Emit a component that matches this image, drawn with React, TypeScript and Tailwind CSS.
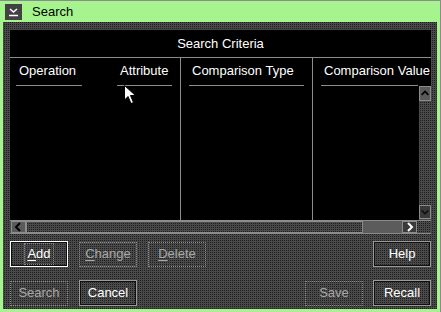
import React from "react";

const dither =
  "bg-[#3e3e3e] bg-[image:conic-gradient(#1e1e1e_0_25%,#4a4a4a_0_100%)] bg-[size:2px_2px]";

type BtnProps = {
  label: string;
  mnemonic?: number;
  disabled?: boolean;
  focused?: boolean;
};

function Button({ label, mnemonic, disabled, focused }: BtnProps) {
  const text =
    mnemonic === undefined ? (
      label
    ) : (
      <>
        {label.slice(0, mnemonic)}
        <span className="underline underline-offset-2">{label[mnemonic]}</span>
        {label.slice(mnemonic + 1)}
      </>
    );

  if (disabled) {
    return (
      <div className="flex h-[25px] w-[58px] items-center justify-center border border-dotted border-[#8a8a8a] text-[13px] text-[#a8a8a8]">
        {text}
      </div>
    );
  }

  return (
    <div
      className={
        "flex h-[26px] w-[58px] items-center justify-center border text-[13px] text-white shadow-[inset_0_0_0_1px_#101010] " +
        (focused ? "border-white" : "border-[#9a9a9a]")
      }
    >
      <span className={focused ? "outline outline-1 outline-dotted outline-[#8a8a8a] px-[2px]" : ""}>
        {text}
      </span>
    </div>
  );
}

function Chevron({ dir, color }: { dir: "up" | "down" | "left" | "right"; color: string }) {
  const paths = {
    up: "M2 7 L6 3 L10 7",
    down: "M2 4 L6 8 L10 4",
    left: "M7 2 L3 6 L7 10",
    right: "M4 2 L8 6 L4 10",
  };
  return (
    <svg width="12" height="12" viewBox="0 0 12 12">
      <path d={paths[dir]} fill="none" stroke={color} strokeWidth="2" />
    </svg>
  );
}

function ColumnHeader({ label, className }: { label: string; className: string }) {
  return (
    <div
      className={
        "whitespace-nowrap border-b border-[#8c8c8c] pl-[3px] pt-[5px] pb-[6px] leading-[16px] " + className
      }
    >
      {label}
    </div>
  );
}

export default function App() {
  return (
    <div className="relative h-[312px] w-[441px] overflow-hidden border-t border-r border-[#8c8c8c] bg-[#a6f48e] font-['Liberation_Sans',Arial,sans-serif] text-[13px]">
      {/* title bar */}
      <div className="flex h-[21px] items-center pl-[5px]">
        <div className="flex h-[16px] w-[17px] items-center justify-center bg-[#424242]">
          <svg width="11" height="10" viewBox="0 0 11 10">
            <path d="M2 2 L5.5 5 L9 2" fill="none" stroke="#fff" strokeWidth="1.5" />
            <path d="M1 8.5 H10" stroke="#fff" strokeWidth="1.5" />
          </svg>
        </div>
        <span className="ml-[10px] text-[13px] leading-none text-black">Search</span>
      </div>

      {/* client area */}
      <div className={"mx-[3px] flex h-[287px] flex-col pl-[7px] pr-[6px] pt-[8px] " + dither}>
        <div className="flex flex-col bg-black text-white">
          <div className="flex h-[28px] items-center justify-center border-b border-[#8c8c8c] pt-[1px]">
            Search Criteria
          </div>
          <div className="flex h-[162px]">
            <div className="flex w-[171px] border-r border-[#8c8c8c]">
              <ColumnHeader label="Operation" className="ml-[6px] h-[28px] w-[66px]" />
              <ColumnHeader label="Attribute" className="ml-[35px] h-[28px] w-[55px]" />
            </div>
            <div className="w-[132px] border-r border-[#8c8c8c]">
              <ColumnHeader label="Comparison Type" className="ml-[8px] h-[28px] w-[115px]" />
            </div>
            <div className="flex flex-1 flex-col overflow-hidden">
              <ColumnHeader label="Comparison Value" className="ml-[8px] mr-[13px] h-[28px]" />
              <div className="flex flex-1">
                <div className="flex-1" />
                <div className={"flex w-[12px] flex-col justify-between pb-[1px] " + dither}>
                  <div className="flex h-[15px] items-center justify-center border border-[#8c8c8c] bg-[#5a5a5a]">
                    <Chevron dir="up" color="#000" />
                  </div>
                  <div className="flex h-[14px] items-center justify-center border border-[#8c8c8c] bg-[#3a3a3a]">
                    <Chevron dir="down" color="#111" />
                  </div>
                </div>
              </div>
            </div>
          </div>
          <div className={"flex h-[14px] items-stretch border-y border-[#8c8c8c] " + dither}>
            <div className="ml-[1px] flex w-[15px] items-center justify-center border border-[#8c8c8c] bg-[#5a5a5a]">
              <Chevron dir="left" color="#000" />
            </div>
            <div className="w-[337px] border border-[#8c8c8c]" />
            <div className="w-[39px] bg-[#5c5c5c]" />
            <div className="flex w-[15px] items-center justify-center border border-[#8c8c8c] bg-[#3a3a3a]">
              <Chevron dir="right" color="#fff" />
            </div>
            <div className="flex-1" />
          </div>
        </div>

        {/* buttons */}
        <div className="mt-[7px] flex items-center">
          <Button label="Add" mnemonic={0} focused />
          <div className="ml-[11px]">
            <Button label="Change" mnemonic={0} disabled />
          </div>
          <div className="ml-[11px]">
            <Button label="Delete" mnemonic={0} disabled />
          </div>
          <div className="ml-auto">
            <Button label="Help" />
          </div>
        </div>
        <div className="mt-[13px] flex items-center">
          <Button label="Search" disabled />
          <div className="ml-[11px]">
            <Button label="Cancel" />
          </div>
          <div className="ml-auto">
            <Button label="Save" disabled />
          </div>
          <div className="ml-[10px]">
            <Button label="Recall" />
          </div>
        </div>
      </div>

      {/* mouse pointer */}
      <svg className="absolute left-[124px] top-[84px]" width="13" height="20" viewBox="0 0 13 20">
        <path d="M0.5 0.5 L0.5 15 L4 11.5 L7 18.5 L9.5 17.5 L6.5 10.5 L11.5 10.5 Z" fill="#fff" stroke="#000" strokeWidth="1" />
      </svg>
    </div>
  );
}
